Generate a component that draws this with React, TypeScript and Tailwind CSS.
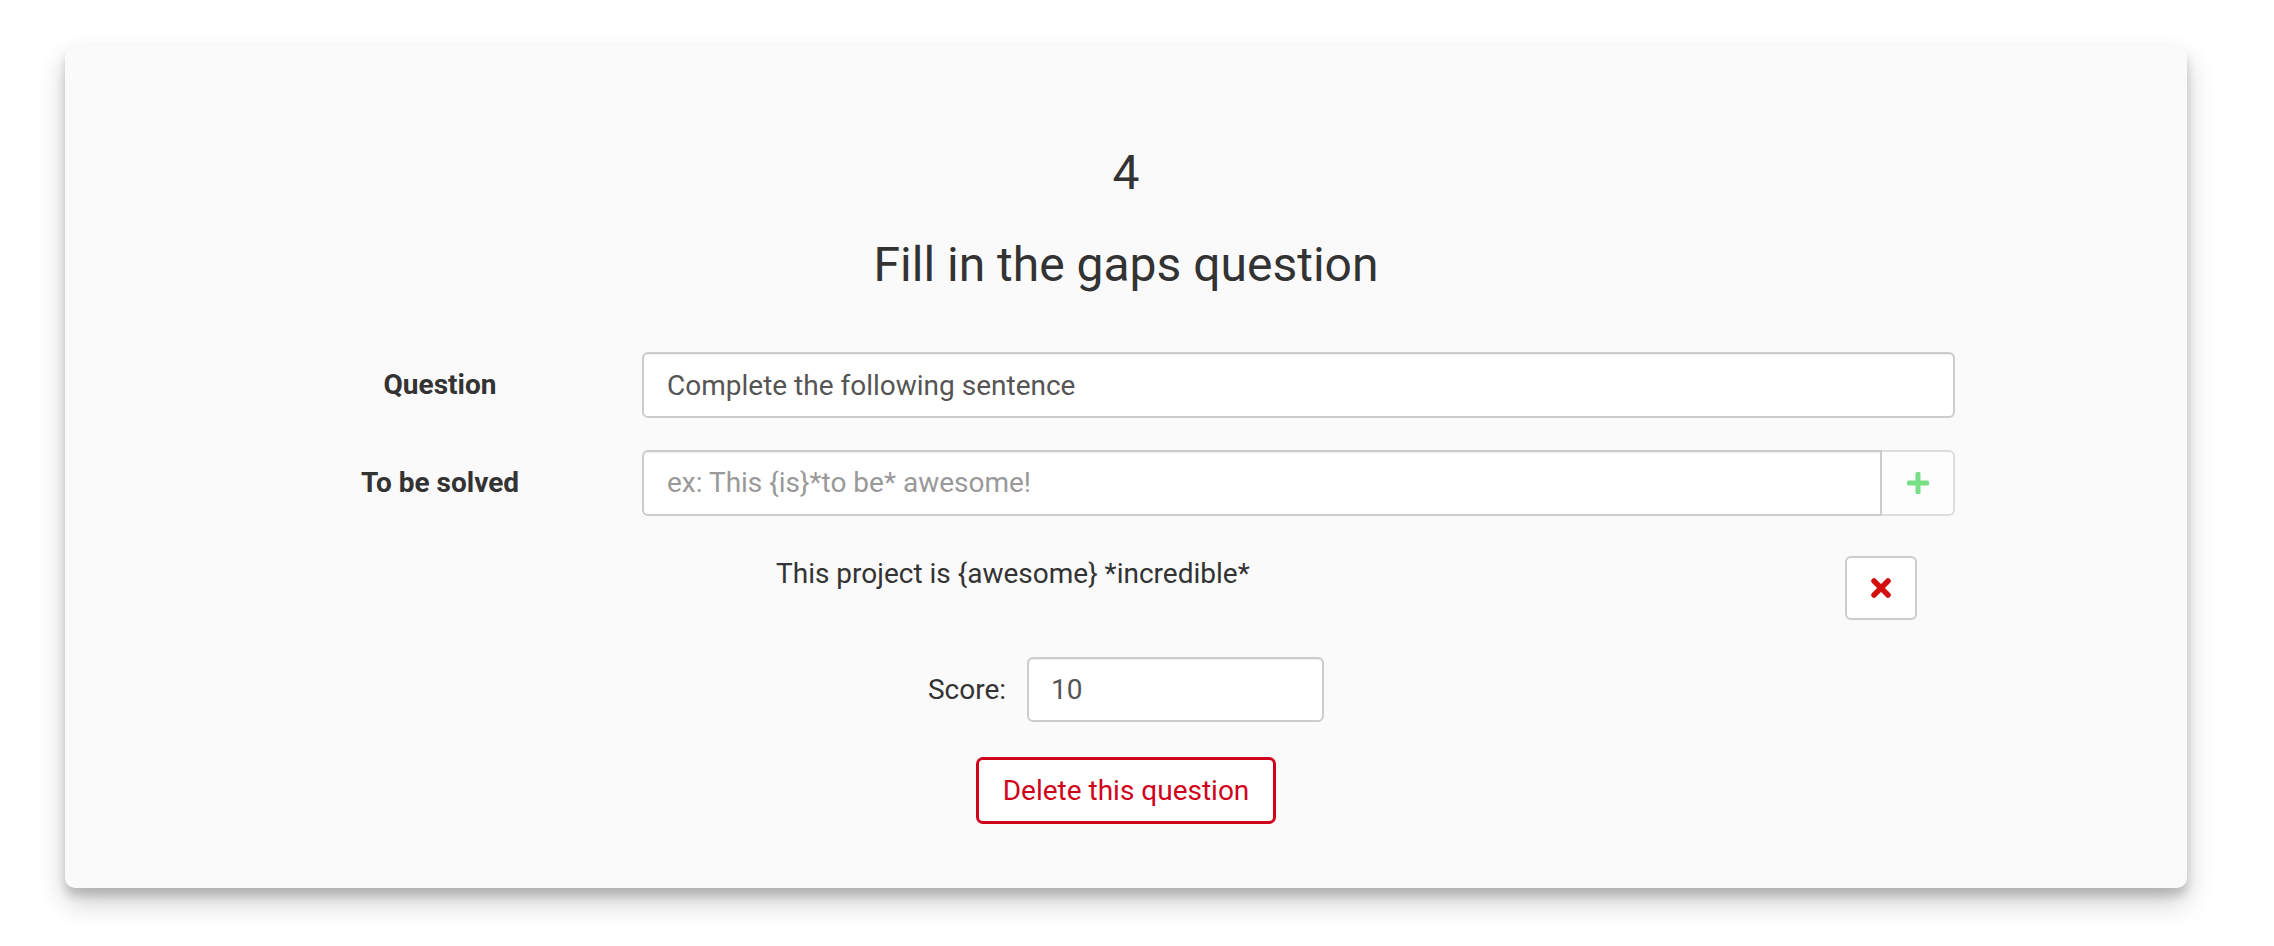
export default function App() {
  return (
    <div className="min-h-[946px] bg-white pt-[46px] pl-[65px]" style={{ fontFamily: "Roboto, 'Liberation Sans', sans-serif" }}>
      <div className="w-[2122px] h-[842px] rounded-[10px] bg-[#fafafa] shadow-[0_14px_28px_rgba(0,0,0,0.2),0_8px_10px_rgba(0,0,0,0.16)] pt-[99px] text-[#333]">
        <div className="text-center text-[48px] leading-[56px]">4</div>
        <h2 className="mt-[36px] text-center text-[48px] leading-[56px]">Fill in the gaps question</h2>

        <div className="ml-[173px] w-[1717px] mt-[59px]">
          <div className="flex items-center">
            <label className="w-[404px] text-center text-[28px] font-bold">Question</label>
            <input
              defaultValue="Complete the following sentence"
              className="flex-1 h-[66px] rounded-[6px] border-2 border-[#ccc] bg-white px-[23px] text-[28px] text-[#555] shadow-[inset_0_1px_1px_rgba(0,0,0,0.075)] outline-none"
            />
          </div>

          <div className="flex items-center mt-[32px]">
            <label className="w-[404px] text-center text-[28px] font-bold">To be solved</label>
            <div className="flex flex-1 h-[66px]">
              <input
                placeholder="ex: This {is}*to be* awesome!"
                className="flex-1 rounded-l-[6px] border-2 border-[#ccc] bg-white px-[23px] text-[28px] text-[#555] placeholder:text-[#999] shadow-[inset_0_1px_1px_rgba(0,0,0,0.075)] outline-none"
              />
              <button className="w-[73px] flex items-center justify-center rounded-r-[6px] border-2 border-l-0 border-[#ddd] bg-[#fdfdfd]">
                <svg width="22" height="22" viewBox="0 0 22 22">
                  <rect x="8.5" y="0" width="5" height="22" rx="1.5" fill="#79df86" />
                  <rect x="0" y="8.5" width="22" height="5" rx="1.5" fill="#79df86" />
                </svg>
              </button>
            </div>
          </div>

          <div className="flex items-start justify-between mt-[40px] pl-[538px] pr-[38px]">
            <p className="text-[28px] leading-[32px] pt-[2px]">This project is {"{awesome}"} *incredible*</p>
            <button className="w-[72px] h-[64px] flex items-center justify-center rounded-[6px] border-2 border-[#ccc] bg-white">
              <svg width="20" height="20" viewBox="0 0 20 20">
                <path d="M3 3 L17 17 M17 3 L3 17" stroke="#d30f0f" strokeWidth="5.5" strokeLinecap="round" />
              </svg>
            </button>
          </div>
        </div>

        <div className="flex items-center justify-center mt-[37px]">
          <span className="text-[28px]">Score:</span>
          <input
            defaultValue="10"
            className="ml-[21px] w-[297px] h-[65px] rounded-[6px] border-2 border-[#ccc] bg-white px-[22px] text-[28px] text-[#555] shadow-[inset_0_1px_1px_rgba(0,0,0,0.075)] outline-none"
          />
        </div>

        <div className="flex justify-center mt-[35px]">
          <button className="w-[300px] h-[67px] rounded-[7px] border-[3px] border-[#d0021b] bg-white text-[28px] text-[#d0021b]">
            Delete this question
          </button>
        </div>
      </div>
    </div>
  );
}
